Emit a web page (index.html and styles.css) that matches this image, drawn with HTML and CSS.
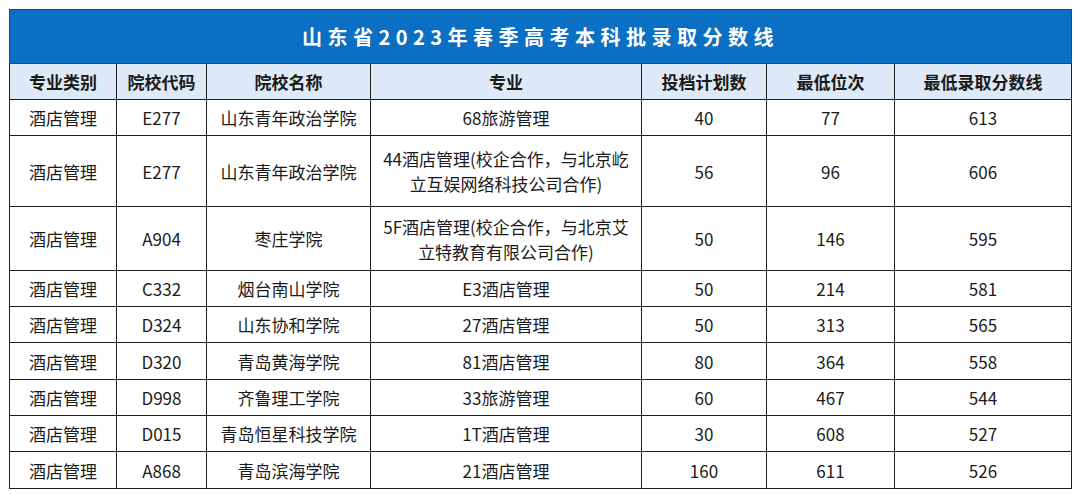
FILE: index.html
```html
<!DOCTYPE html>
<html lang="zh">
<head>
<meta charset="utf-8">
<link rel="stylesheet" href="styles.css">
</head>
<body>
<table class="score">
  <colgroup>
    <col class="c1"><col class="c2"><col class="c3"><col class="c4"><col class="c5"><col class="c6"><col class="c7">
  </colgroup>
  <thead>
    <tr class="title-row"><th colspan="7" class="title">山东省2023年春季高考本科批录取分数线</th></tr>
    <tr class="head-row">
      <th>专业类别</th><th>院校代码</th><th>院校名称</th><th>专业</th><th>投档计划数</th><th>最低位次</th><th>最低录取分数线</th>
    </tr>
  </thead>
  <tbody>
    <tr class="r"><td>酒店管理</td><td>E277</td><td>山东青年政治学院</td><td>68旅游管理</td><td>40</td><td>77</td><td>613</td></tr>
    <tr class="r2a"><td>酒店管理</td><td>E277</td><td>山东青年政治学院</td><td>44酒店管理(校企合作，与北京屹<br>立互娱网络科技公司合作)</td><td>56</td><td>96</td><td>606</td></tr>
    <tr class="r2b"><td>酒店管理</td><td>A904</td><td>枣庄学院</td><td>5F酒店管理(校企合作，与北京艾<br>立特教育有限公司合作)</td><td>50</td><td>146</td><td>595</td></tr>
    <tr class="r"><td>酒店管理</td><td>C332</td><td>烟台南山学院</td><td>E3酒店管理</td><td>50</td><td>214</td><td>581</td></tr>
    <tr class="r"><td>酒店管理</td><td>D324</td><td>山东协和学院</td><td>27酒店管理</td><td>50</td><td>313</td><td>565</td></tr>
    <tr class="r r37"><td>酒店管理</td><td>D320</td><td>青岛黄海学院</td><td>81酒店管理</td><td>80</td><td>364</td><td>558</td></tr>
    <tr class="r"><td>酒店管理</td><td>D998</td><td>齐鲁理工学院</td><td>33旅游管理</td><td>60</td><td>467</td><td>544</td></tr>
    <tr class="r"><td>酒店管理</td><td>D015</td><td>青岛恒星科技学院</td><td>1T酒店管理</td><td>30</td><td>608</td><td>527</td></tr>
    <tr class="r r37"><td>酒店管理</td><td>A868</td><td>青岛滨海学院</td><td>21酒店管理</td><td>160</td><td>611</td><td>526</td></tr>
  </tbody>
</table>
</body>
</html>
```

FILE: styles.css
```css
html, body {
  margin: 0;
  padding: 0;
  background: #ffffff;
}
body {
  padding: 9px 9px 0 9px;
  font-family: "Microsoft YaHei", "Noto Sans CJK SC", "Noto Sans", sans-serif;
  color: #1b1b1b;
}
.score {
  border-collapse: collapse;
  table-layout: fixed;
  width: 1062px;
}
.c1 { width: 107px; }
.c2 { width: 90px; }
.c3 { width: 164px; }
.c4 { width: 271px; }
.c5 { width: 125px; }
.c6 { width: 128px; }
.c7 { width: 177px; }

.score th, .score td {
  border: 1px solid #1e1e1e;
  text-align: center;
  vertical-align: middle;
  padding: 0;
  font-size: 17px;
  line-height: 25px;
  white-space: nowrap;
}
.title-row { height: 54px; }
.score th.title {
  background: #0b6fc3;
  border: 1px solid #0d4f8c;
  color: #ffffff;
  font-size: 20px;
  font-weight: 700;
  letter-spacing: 5.5px;
  padding-left: 0;
}
.head-row { height: 36px; }
.head-row th {
  background: #dde9f6;
  font-weight: 700;
  color: #1a1a1a;
}
.r { height: 36px; }
.r37 { height: 37px; }
.r2a { height: 71px; }
.r2b { height: 64px; }
```
